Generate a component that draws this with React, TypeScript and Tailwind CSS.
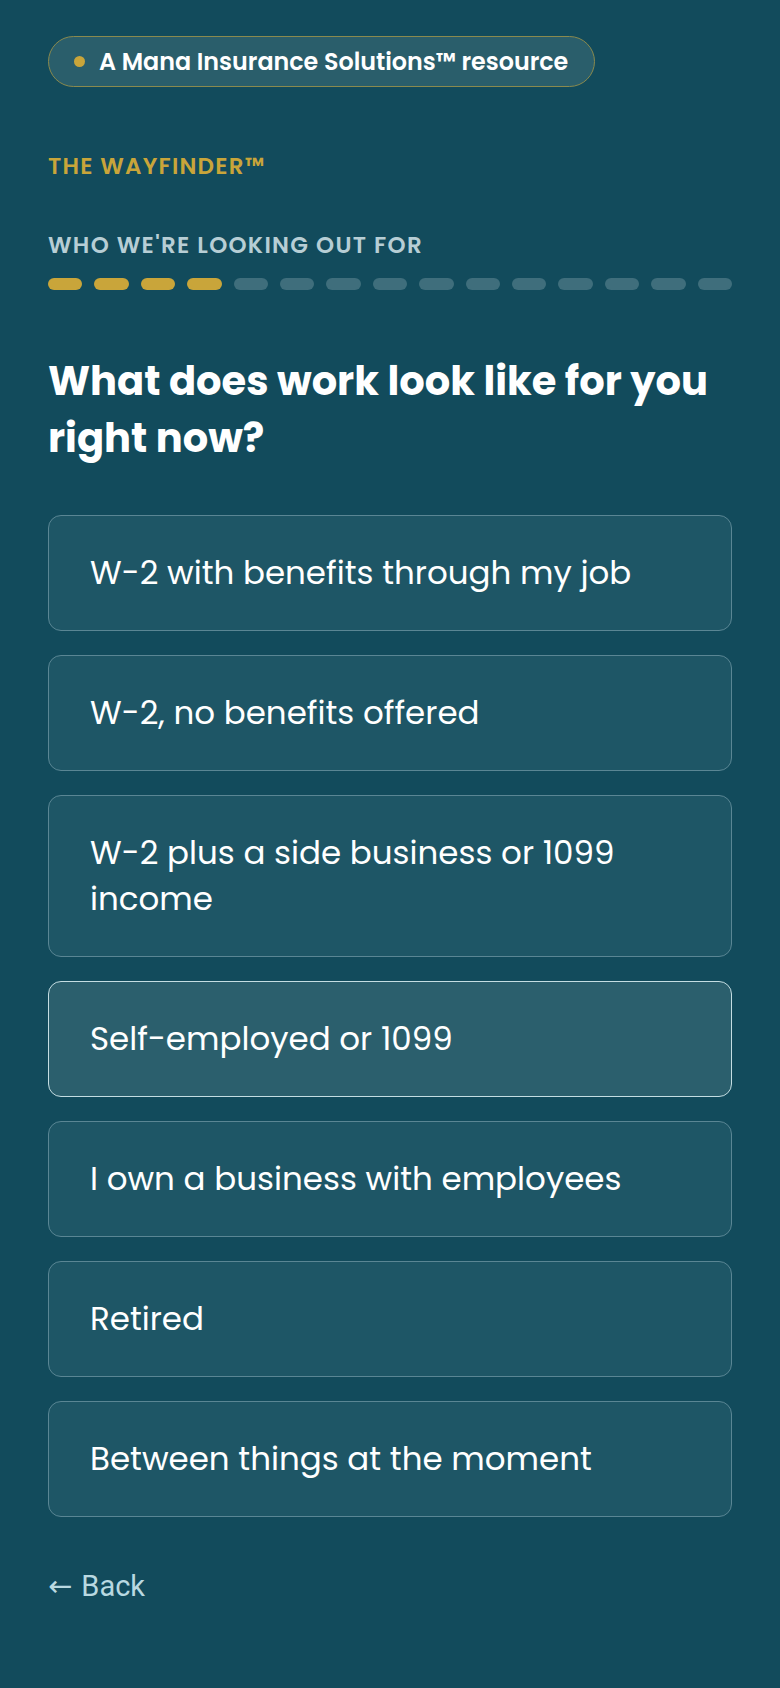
import React, { useState } from "react";

const OPTIONS = [
  "W-2 with benefits through my job",
  "W-2, no benefits offered",
  "W-2 plus a side business or 1099 income",
  "Self-employed or 1099",
  "I own a business with employees",
  "Retired",
  "Between things at the moment",
];

const TOTAL_STEPS = 15;
const CURRENT_STEP = 4;

export default function App() {
  const [selected, setSelected] = useState(3);

  return (
    <div className="min-h-[1688px] w-full bg-[#124b5c] px-12 pt-9 pb-16 font-['Poppins','Open_Sans',sans-serif] text-white">
      {/* resource pill */}
      <div className="inline-flex h-[51px] items-center gap-[14px] rounded-full border-[1.5px] border-[#8a8a4e] bg-[#2a5e6b] pl-[25px] pr-[26px]">
        <span className="h-[11px] w-[11px] rounded-full bg-[#c9a53a]" />
        <span className="text-[23.8px] font-semibold">
          A Mana Insurance Solutions™ resource
        </span>
      </div>

      <div className="mt-[65px] text-[23px] leading-7 font-semibold tracking-[1.2px] text-[#c9a53a]">
        THE WAYFINDER™
      </div>

      <div className="mt-[51px] text-[23px] leading-7 font-semibold tracking-[1.3px] text-[#b7ced5]">
        WHO WE'RE LOOKING OUT FOR
      </div>

      {/* progress */}
      <div className="mt-[19px] flex gap-3">
        {Array.from({ length: TOTAL_STEPS }).map((_, i) => (
          <div
            key={i}
            className={
              i < CURRENT_STEP
                ? "h-3 flex-1 rounded-full bg-[#c9a53a]"
                : "h-3 flex-1 rounded-full bg-[#3f6e7c]"
            }
          />
        ))}
      </div>

      <h1 className="mt-[63px] text-[40px] leading-[57px] font-bold">
        What does work look like for you right now?
      </h1>

      <div className="mt-[48px] flex flex-col gap-[24px]">
        {OPTIONS.map((label, i) => {
          const active = i === selected;
          return (
            <button
              key={label}
              onClick={() => setSelected(i)}
              className={
                active
                  ? "w-full rounded-[13px] border-[1.5px] border-[#c4dde2] bg-[#2b5f6d] py-[34px] pl-[41px] pr-10 text-left text-[32.5px] leading-[46px] text-white"
                  : "w-full rounded-[13px] border-[1.5px] border-[#5a8694] bg-[#1e5666] py-[34px] pl-[41px] pr-10 text-left text-[32.5px] leading-[46px] text-white"
              }
            >
              {label}
            </button>
          );
        })}
      </div>

      <button className="mt-[53px] flex items-center font-['Roboto',sans-serif] text-[29px] leading-8 text-[#b9d9e1]">
        <span className="font-['DejaVu_Sans',sans-serif]">←</span>
        <span className="ml-[9px]">Back</span>
      </button>
    </div>
  );
}
